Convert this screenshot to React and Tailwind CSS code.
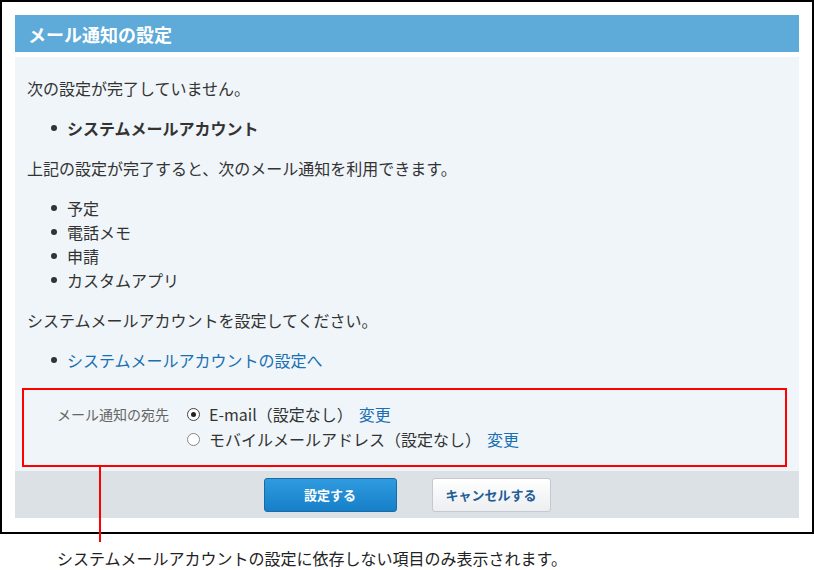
import React from "react";

const font = { fontFamily: '"Noto Sans CJK JP", "Noto Sans", sans-serif' };

const Bullet = ({ children, className = "" }) => (
  <li className={`flex items-center ${className}`}>
    <span className="w-[6px] h-[6px] rounded-full bg-[#333] mr-[10px] shrink-0" />
    <span>{children}</span>
  </li>
);

const Radio = ({ checked }) => (
  <span
    className={`w-[13px] h-[13px] rounded-full border bg-white flex items-center justify-center shrink-0 ${
      checked ? "border-[#444]" : "border-[#888]"
    }`}
  >
    {checked && <span className="w-[5px] h-[5px] rounded-full bg-[#222]" />}
  </span>
);

const App = () => {
  const apps = ["予定", "電話メモ", "申請", "カスタムアプリ"];

  return (
    <div className="w-[814px] bg-white text-[#333]" style={font}>
      <div className="w-[814px] border-2 border-black px-[13px] pt-[13px] pb-[14px]">
        <div className="h-[37px] bg-[#5eaad9] flex items-center pl-[13px]">
          <h1 className="text-[18px] leading-[24px] font-bold text-white">メール通知の設定</h1>
        </div>

        <div className="mt-[5px] bg-[#eff5f8] pt-[19px] pb-[4px]">
          <div className="pl-[12px] text-[16px] leading-[24px]">
            <p>次の設定が完了していません。</p>
            <ul className="mt-4 pl-[24px] font-bold">
              <Bullet>システムメールアカウント</Bullet>
            </ul>
            <p className="mt-4">上記の設定が完了すると、次のメール通知を利用できます。</p>
            <ul className="mt-4 pl-[24px]">
              {apps.map((a) => (
                <Bullet key={a}>{a}</Bullet>
              ))}
            </ul>
            <p className="mt-4">システムメールアカウントを設定してください。</p>
            <ul className="mt-4 pl-[24px]">
              <Bullet>
                <a href="#" className="text-[#1a6fb3]">
                  システムメールアカウントの設定へ
                </a>
              </Bullet>
            </ul>
          </div>

          <div className="relative mt-[16px] ml-[7px] mr-[12px] border-2 border-[#ff0000] pt-[12px] pb-[13px] pl-[33px] flex">
            <div className="w-[130px] text-[14px] leading-[25px] text-[#666]">メール通知の宛先</div>
            <div className="text-[16px] leading-[25px]">
              <div className="flex items-center">
                <Radio checked />
                <span className="ml-[9px]">E-mail（設定なし）</span>
                <a href="#" className="ml-[6px] text-[#1a6fb3]">変更</a>
              </div>
              <div className="flex items-center">
                <Radio />
                <span className="ml-[9px]">モバイルメールアドレス（設定なし）</span>
                <a href="#" className="ml-[6px] text-[#1a6fb3]">変更</a>
              </div>
            </div>
            <span className="absolute left-[75px] top-full w-[2px] h-[77px] bg-[#ff0000] z-10" />
          </div>
        </div>

        <div className="h-[47px] bg-[#dce1e5] flex items-center justify-center gap-[35px]">
          <button className="w-[133px] h-[34px] rounded-[3px] border border-[#1b6aa6] bg-linear-to-b from-[#2f9be0] to-[#1580c8] text-white text-[13px] font-bold">
            設定する
          </button>
          <button className="w-[119px] h-[34px] rounded-[3px] border border-[#c3c9ce] bg-linear-to-b from-white to-[#eceef0] text-[#1f5d96] text-[13px] font-bold">
            キャンセルする
          </button>
        </div>
      </div>

      <p className="mt-[12px] pl-[57px] text-[16px] leading-[24px] text-[#222]">
        システムメールアカウントの設定に依存しない項目のみ表示されます。
      </p>
    </div>
  );
};

export default App;
